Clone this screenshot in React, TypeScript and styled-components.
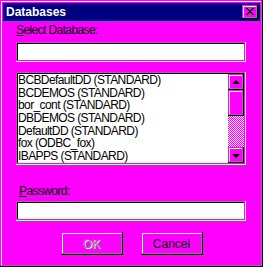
import styled, { createGlobalStyle } from "styled-components";

const face = "#ff00ff";

const GlobalStyle = createGlobalStyle`
  html, body {
    margin: 0;
    padding: 0;
    background: ${face};
  }
  body {
    font-family: "Liberation Sans", Arial, sans-serif;
    font-size: 12px;
    letter-spacing: -0.6px;
    color: #000;
  }
`;

const databases = [
  "BCBDefaultDD (STANDARD)",
  "BCDEMOS (STANDARD)",
  "bor_cont (STANDARD)",
  "DBDEMOS (STANDARD)",
  "DefaultDD (STANDARD)",
  "fox (ODBC_fox)",
  "IBAPPS (STANDARD)",
];

const App = () => {
  return (
    <>
      <GlobalStyle />
      <Window>
        <TitleBar>
          <Title>Databases</Title>
          <CloseButton aria-label="Close">
            <svg width="8" height="7" viewBox="0 0 8 7">
              <path
                d="M0 0h2v1h1v1h2V1h1V0h2v1H7v1H6v1H5v1h1v1h1v1h1v1H6V6H5V5H3v1H2v1H0V6h1V5h1V4h1V3H2V2H1V1H0z"
                fill="#000"
              />
            </svg>
          </CloseButton>
        </TitleBar>
        <Body>
          <Label>
            <u>S</u>elect Database:
          </Label>
          <Field type="text" />
          <ListBox>
            <Items>
              {databases.map((name) => (
                <Item key={name}>{name}</Item>
              ))}
            </Items>
            <ScrollBar>
              <ScrollButton>
                <Arrow $dir="up" />
              </ScrollButton>
              <Thumb />
              <Track />
              <ScrollButton>
                <Arrow $dir="down" />
              </ScrollButton>
            </ScrollBar>
          </ListBox>
          <Label $indent $gap={20}>
            <u>P</u>assword:
          </Label>
          <Field type="password" $gap={3} />
          <ButtonRow>
            <PushButton disabled>OK</PushButton>
            <PushButton>Cancel</PushButton>
          </ButtonRow>
        </Body>
      </Window>
    </>
  );
};

export default App;

const raised = `
  box-shadow: inset -1px -1px #000, inset 1px 1px ${face},
    inset -2px -2px #808080, inset 2px 2px #fff;
`;

const sunken = `
  box-shadow: inset -1px -1px #fff, inset 1px 1px #808080,
    inset -2px -2px ${face}, inset 2px 2px #000;
`;

const Window = styled.div`
  box-sizing: border-box;
  width: 263px;
  height: 267px;
  padding: 3px;
  background: ${face};
  box-shadow: inset -1px -1px #000, inset 1px 1px ${face},
    inset -2px -2px #808080, inset 2px 2px #fff;
  display: flex;
  flex-direction: column;
`;

const TitleBar = styled.div`
  height: 18px;
  flex-shrink: 0;
  background: #000080;
  display: flex;
  align-items: center;
  justify-content: space-between;
  padding: 0 2px 0 3px;
`;

const Title = styled.span`
  color: #fff;
  font-weight: bold;
  font-size: 12px;
  letter-spacing: 0;
  line-height: 18px;
`;

const CloseButton = styled.button`
  box-sizing: border-box;
  width: 16px;
  height: 14px;
  padding: 0 0 1px 0;
  border: 0;
  background: ${face};
  ${raised}
  display: flex;
  align-items: center;
  justify-content: center;
`;

const Body = styled.div`
  padding: 3px 13px 0;
  display: flex;
  flex-direction: column;
`;

const Label = styled.div<{ $indent?: boolean; $gap?: number }>`
  line-height: 13px;
  height: 13px;
  margin-top: ${(p) => p.$gap ?? 0}px;
  padding-left: ${(p) => (p.$indent ? 3 : 0)}px;
`;

const Field = styled.input<{ $gap?: number }>`
  box-sizing: border-box;
  width: 230px;
  height: 20px;
  margin: ${(p) => p.$gap ?? 5}px 0 0;
  padding: 2px 3px;
  border: 0;
  outline: none;
  background: #fff;
  font: inherit;
  ${sunken}
`;

const ListBox = styled.div`
  box-sizing: border-box;
  width: 230px;
  height: 93px;
  margin-top: 10px;
  padding: 2px;
  background: #fff;
  ${sunken}
  display: flex;
`;

const Items = styled.ul`
  flex: 1;
  margin: 0;
  padding: 0;
  list-style: none;
  overflow: hidden;
`;

const Item = styled.li`
  height: 12.7px;
  line-height: 12px;
  white-space: nowrap;
`;

const ScrollBar = styled.div`
  width: 16px;
  display: flex;
  flex-direction: column;
`;

const ScrollButton = styled.div`
  height: 16px;
  flex-shrink: 0;
  background: ${face};
  ${raised}
  display: flex;
  align-items: center;
  justify-content: center;
`;

const Arrow = styled.span<{ $dir: "up" | "down" }>`
  width: 0;
  height: 0;
  border-left: 4px solid transparent;
  border-right: 4px solid transparent;
  ${(p) =>
    p.$dir === "up"
      ? "border-bottom: 4px solid #000; margin-top: -1px;"
      : "border-top: 4px solid #000; margin-top: 1px;"}
`;

const Thumb = styled.div`
  height: 26px;
  flex-shrink: 0;
  background: ${face};
  ${raised}
`;

const Track = styled.div`
  flex: 1;
  background-image: conic-gradient(
    #fff 25%,
    ${face} 0 50%,
    #fff 0 75%,
    ${face} 0
  );
  background-size: 2px 2px;
`;

const ButtonRow = styled.div`
  margin-top: 11px;
  display: flex;
  justify-content: center;
  gap: 18px;
`;

const PushButton = styled.button`
  box-sizing: border-box;
  width: 62px;
  height: 23px;
  padding: 0;
  border: 0;
  background: ${face};
  ${raised}
  font: inherit;
  color: #000;

  &:disabled {
    color: #808080;
    text-shadow: 1px 1px #fff;
  }
`;
